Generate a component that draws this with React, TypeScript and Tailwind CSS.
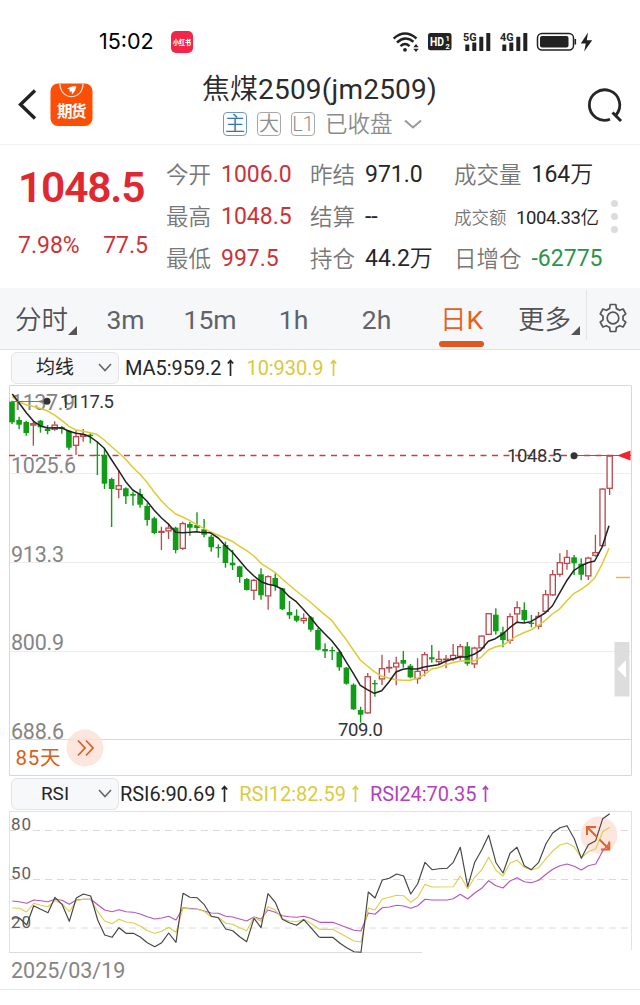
import React from "react";

type Pt = [number, number];
type Candle = [number, number, number, number, "g" | "r"];

const FONT = "font-['Roboto','Noto_Sans_CJK_SC',sans-serif]";

// Each series is stored in thirds of a pixel, in segments with their own origin.
const place = (pts: Pt[], ox: number, oy: number): string =>
  pts.map(([x, y]) => `${(ox + x / 3).toFixed(1)},${(oy + y / 3).toFixed(1)}`).join(" ");

// wick top, body top, body bottom, wick bottom, direction
const candles: Candle[] = [
  [400.7, 401.7, 422.3, 424, "g"], [416.7, 420, 424.7, 429.3, "g"], [420.7, 422, 433, 435.7, "g"],
  [420, 423.3, 425.5, 445.7, "r"], [420, 420.7, 427.3, 432.7, "g"], [425, 428.7, 431, 434.3, "g"],
  [421.3, 424.7, 429.7, 430.7, "r"], [426, 427, 429, 433.7, "g"], [430, 430.7, 447.7, 450, "g"],
  [430, 436.3, 445.7, 455, "r"], [429, 434.3, 436.7, 441.7, "r"], [433.3, 434.7, 436, 443.3, "g"],
  [441.7, 454.7, 455.7, 475, "g"], [448.3, 455.3, 483.7, 489, "g"], [477.7, 479, 489, 527, "g"],
  [470, 485.3, 489.7, 498.3, "r"], [487.3, 488.3, 496.3, 504, "g"], [491.7, 494, 495.7, 505.7, "g"],
  [488.7, 494, 504.7, 507.7, "g"], [503.3, 506, 520, 525.7, "g"], [516.7, 518.3, 533, 534.3, "g"],
  [526.7, 531, 532.7, 550, "r"], [523.3, 527.7, 531.3, 539, "r"], [526.7, 527.7, 550, 553.3, "g"],
  [521.7, 523.3, 548.7, 550, "r"], [522, 524, 527.7, 535.7, "g"], [512.3, 525, 528, 531, "g"],
  [519, 529.3, 534.7, 537.3, "g"], [535, 536.7, 547.3, 551.7, "g"], [544.3, 547, 548.3, 557.7, "g"],
  [541.7, 545, 563, 567.7, "g"], [550, 562.7, 565.3, 570, "g"], [565.7, 566.3, 577, 582.7, "g"],
  [578, 579, 590, 590.5, "g"], [579, 580, 590.7, 600, "r"], [568.3, 574.3, 595.3, 599.7, "g"],
  [575.3, 576.3, 596.3, 609.7, "r"], [573.3, 578, 586, 590.7, "g"], [588, 588.3, 609.3, 610, "g"],
  [601, 612, 615.3, 619, "g"], [609.3, 615.7, 620.7, 622.3, "g"], [613.3, 618, 621, 623.7, "r"],
  [616, 617.3, 629.7, 631.7, "g"], [628, 630, 649.7, 650.5, "g"], [643.3, 649, 651.3, 658, "g"],
  [646.7, 650, 651.3, 660, "g"], [650, 652, 667.3, 670.7, "g"], [667, 667.7, 683.7, 684.7, "g"],
  [683.3, 684.7, 709.3, 710, "g"], [706.7, 710, 714.7, 722.7, "g"], [673, 676.3, 713.3, 714, "r"],
  [680, 683, 684.3, 696.7, "g"], [654.7, 668.3, 679.3, 685, "r"], [660, 667, 668, 672.7, "r"],
  [656.7, 662.7, 667.3, 685.3, "r"], [651, 660, 663.7, 667.7, "g"], [664, 665.7, 677.3, 678.3, "g"],
  [658.3, 671, 679, 683.7, "r"], [652, 654.3, 670.7, 676.3, "r"], [645, 657.3, 659.3, 662.7, "g"],
  [650.7, 659, 662, 664, "r"], [655, 658.7, 660, 668.3, "r"], [644, 655, 659.3, 661, "r"],
  [644, 646.3, 656.7, 660.3, "r"], [642, 646.3, 663.7, 665.7, "g"], [646.7, 647.7, 664.3, 668, "r"],
  [635.3, 635.7, 648.3, 649, "r"], [613, 613.3, 634.7, 635, "r"], [608.3, 614.7, 631.3, 634.7, "g"],
  [626.7, 632.3, 640, 647.3, "g"], [613.3, 616.3, 640.7, 643.7, "r"], [601.3, 607.3, 614.3, 622.7, "r"],
  [602.3, 610, 620, 622, "g"], [615, 622.7, 624, 627.3, "g"], [612, 616, 626.7, 629.3, "r"],
  [590, 594.3, 611.7, 613.3, "r"], [570, 574.3, 595.3, 596, "r"], [553.3, 562.3, 574.7, 576.7, "r"],
  [550, 557, 563.7, 569.7, "r"], [555, 557.3, 563.3, 575, "g"], [558.3, 563.7, 574.7, 580.3, "g"],
  [556.7, 557.7, 576.3, 580, "r"], [534.7, 552.3, 555.7, 556.7, "r"], [488, 488.7, 546, 547.3, "r"],
  [455.7, 455.7, 488.7, 495, "r"],
];

const ma5 = [
  place([[37,42],[58,70],[80,100],[101,124],[122,138],[143,144],[165,143],[186,144],[207,154],[228,160],[250,163],[270,170],[292,186],[313,205],[335,240],[356,272],[377,305],[398,330],[420,343],[441,364],[462,390],[484,413],[505,432],[527,457],[548,458],[570,457],[590,455]], 0, 380),
  place([[0,97],[30,98],[55,114],[76,137],[97,156],[140,207],[162,228],[183,245],[204,253],[225,257],[246,267],[268,290],[289,305],[310,328],[331,352],[352,378],[374,401],[395,422],[417,450],[438,485],[460,520],[481,556],[502,569],[523,580],[545,572],[566,547],[588,516],[609,508],[630,505]], 200, 500),
  place([[30,686],[52,687],[73,681],[95,677],[115,674],[137,664],[158,657],[180,651],[200,651],[222,643],[243,630],[265,604],[286,596],[308,582],[329,563],[350,547],[371,549],[392,545],[414,532],[435,519],[457,498],[478,461],[499,424],[521,392],[542,378],[563,368],[584,363],[606,322],[627,257]], 400, 440),
].join(" ");

const ma10 = [
  place([[37,50],[50,62],[80,75],[110,82],[143,93],[165,106],[186,122],[207,139],[228,150],[250,154],[290,163],[313,180],[335,200],[356,218],[377,238],[398,262],[420,283],[441,307],[462,335],[484,362],[505,383],[527,402],[548,411],[570,422],[590,434]], 0, 380),
  place([[0,79],[30,95],[55,106],[97,124],[119,139],[140,152],[162,168],[183,190],[225,217],[246,236],[289,273],[331,306],[352,325],[395,361],[417,391],[438,418],[460,450],[481,480],[502,498],[523,515],[545,529],[566,534],[588,539],[609,541]], 200, 500),
  place([[30,721],[52,715],[73,704],[95,687],[115,683],[137,674],[158,668],[180,663],[222,663],[243,652],[265,630],[286,621],[308,616],[329,602],[350,588],[371,578],[392,570],[414,557],[435,542],[457,522],[478,508],[499,484],[521,461],[542,449],[563,434],[584,414],[606,373],[627,325]], 400, 440),
].join(" ");

const rsi6 = [
  place([[37,684],[58,684],[80,705],[101,647],[122,658],[144,668],[165,622],[186,643],[208,694],[229,624],[250,612],[272,618],[293,690],[314,735],[336,742],[357,713],[378,730],[400,730],[421,741],[442,758],[464,770],[485,758],[506,729],[528,757],[549,610],[570,622],[591,623],[612,643],[634,679],[655,683],[677,717],[698,722],[719,740],[740,755],[762,685],[783,713],[804,611],[826,637],[847,688],[868,698],[890,706],[911,689],[932,712],[956,740]], 0, 690),
  place([[0,502],[38,502],[60,520],[80,533],[102,545],[123,547],[145,366],[165,384],[187,330],[208,325],[230,312],[251,318],[272,372],[293,341],[315,277],[336,299],[357,296],[381,295],[400,277],[421,232],[443,350],[464,277],[485,240],[506,196],[528,278],[549,309],[570,250],[591,232],[613,287],[634,299],[656,277],[678,221],[698,189],[720,173],[741,167],[763,206],[784,265],[805,224],[827,212],[848,146],[869,131]], 320, 770),
].join(" ");

const rsi12 = [
  place([[37,654],[58,655],[80,666],[101,640],[122,646],[144,650],[165,632],[186,641],[208,665],[229,632],[250,628],[272,628],[293,665],[314,693],[336,701],[357,688],[378,696],[400,699],[421,708],[442,722],[464,730],[485,724],[506,712],[528,727],[549,655],[570,657],[591,658],[612,664],[634,680],[655,682],[677,700],[698,703],[719,713],[740,722],[762,682],[783,694],[804,650],[826,660],[847,686],[868,693],[890,695],[911,688],[932,700],[956,716]], 0, 690),
  place([[0,478],[38,478],[60,490],[102,513],[123,516],[145,414],[165,420],[187,387],[208,382],[230,376],[251,377],[272,397],[293,382],[315,343],[336,351],[400,350],[421,318],[443,356],[464,322],[485,300],[506,262],[528,301],[549,318],[570,280],[591,270],[613,292],[634,300],[656,293],[678,266],[698,243],[720,225],[741,219],[763,231],[784,263],[805,245],[827,236],[848,185],[869,172]], 320, 770),
].join(" ");

const rsi24 = [
  place([[37,633],[58,635],[80,640],[101,630],[122,632],[144,635],[165,628],[186,631],[208,643],[229,630],[250,628],[272,628],[293,644],[314,660],[336,665],[357,659],[378,665],[400,667],[421,672],[442,680],[464,687],[485,684],[506,679],[528,690],[549,653],[591,657],[634,669],[655,670],[677,679],[698,681],[719,687],[740,693],[762,681],[783,687],[804,660],[826,667],[847,677],[868,680],[890,682],[911,679],[932,685],[956,695]], 0, 690),
  place([[0,457],[38,457],[60,465],[102,481],[123,483],[145,429],[165,433],[187,413],[208,411],[230,406],[251,408],[272,415],[293,407],[315,388],[336,390],[381,390],[400,386],[421,373],[443,387],[464,369],[485,355],[506,332],[528,347],[549,354],[570,333],[591,323],[613,335],[634,338],[656,331],[678,313],[698,298],[720,287],[741,282],[763,289],[784,300],[805,287],[827,282],[848,243],[869,218]], 320, 770),
].join(" ");

function Signal({ label }: { label: string }) {
  return (
    <svg className="h-5 w-7 shrink-0" viewBox="0 0 28 20" fill="#222">
      <text x="0" y="8.6" fontSize="11" fontWeight="700" textLength="13.5" lengthAdjust="spacingAndGlyphs">{label}</text>
      <rect x="2.3" y="12.5" width="4" height="6.5" rx="0.6" />
      <rect x="9.3" y="10.5" width="4" height="8.5" rx="0.6" />
      <rect x="16.3" y="4.8" width="4" height="14.2" rx="0.6" />
      <rect x="23.3" y="1" width="4" height="18" rx="0.6" />
    </svg>
  );
}

function StatusBar() {
  return (
    <div className="flex h-[70px] items-center pt-[13px]">
      <div className="ml-[99px] w-[72px] font-['Inter',sans-serif] text-[21.500px] font-normal leading-none text-black">15:02</div>
      <div className="flex h-[22px] w-[22px] items-center justify-center rounded-[5px] bg-[#f5254a]">
        <svg viewBox="0 0 22 22" className="h-[22px] w-[22px]">
          <text x="2" y="13.6" fontSize="6.6" fontWeight="900" fill="#fff" textLength="18" lengthAdjust="spacingAndGlyphs">小红书</text>
        </svg>
      </div>
      <svg className="ml-[200px] h-[22px] w-[27px]" viewBox="393 29 27 22" fill="none" stroke="#222" strokeWidth="2.4">
        <path d="M393.6 36.5Q405 26.5 416.5 36.5" />
        <path d="M397 40.5Q405 33 413.5 39.7" />
        <path d="M400.5 44.2Q405 40 409.5 44.2" />
        <circle cx="405" cy="47.8" r="1.9" fill="#222" stroke="none" />
        <path d="M416 42l2.7 3.3h-5.4zM416 50l2.7-3.3h-5.4z" fill="#222" stroke="none" />
      </svg>
      <svg className="ml-[8px] h-[18px] w-[24px]" viewBox="0 0 24 18">
        <rect width="23.5" height="17.3" rx="2.5" fill="#222" />
        <text x="2" y="13.4" fontSize="13.5" fontWeight="700" fill="#fff" textLength="14" lengthAdjust="spacingAndGlyphs">HD</text>
        <text x="17.500" y="8" fontSize="7.500" fontWeight="700" fill="#fff">1</text>
        <text x="17.500" y="15.8" fontSize="7.500" fontWeight="700" fill="#fff">2</text>
      </svg>
      <div className="ml-[11px]"><Signal label="5G" /></div>
      <div className="ml-[9px]"><Signal label="4G" /></div>
      <svg className="ml-[8px] h-5 w-[58px]" viewBox="536 31 58 20">
        <rect x="537.5" y="32.5" width="36" height="16.5" rx="4.5" fill="none" stroke="#222" strokeWidth="1.5" />
        <rect x="540" y="35" width="28.5" height="11.5" rx="2" fill="#222" />
        <path d="M575.3 38v5.5" stroke="#222" strokeWidth="1.6" />
        <path d="M588 31.5l-7.2 11h5l-1.6 8 8-11.2h-5.4z" fill="#222" />
      </svg>
    </div>
  );
}

function Tag({ children, active }: { children: React.ReactNode; active?: boolean }) {
  return (
    <span className={active
      ? "flex h-[24px] w-[24px] items-center justify-center rounded-[4px] border border-[#6c9cc4] text-[20px] font-[350] leading-none text-[#2e78b4]"
      : "flex h-[24px] w-[24px] items-center justify-center rounded-[4px] border border-[#a8a8a8] text-[20px] font-[350] leading-none text-[#8d8d8d]"}>
      {children}
    </span>
  );
}

function Header() {
  return (
    <header className="flex h-[75px] border-b border-[#f1f1f1]">
      <svg className="ml-[16px] mt-[18px] h-[34px] w-[22px] shrink-0" viewBox="16 88 22 34" fill="none" stroke="#222" strokeWidth="3.4">
        <path d="M35 90.5L20.5 104.5L35 118.5" />
      </svg>
      <svg className="ml-[12px] mt-[13px] h-[43px] w-[43px] shrink-0" viewBox="50 83 43 43">
        <rect x="50.5" y="83.5" width="42" height="42.5" rx="7.5" fill="#fb4e06" />
        <path d="M60 83.5C60 101 83 101 83 83.5" fill="none" stroke="#ffd9c5" strokeWidth="1.3" />
        <path d="M67 88.5q5-3 9.500-2q-1 5-4.500 8l-.5-3.500l-2 1l.3-2.500z" fill="#fff" />
        <text x="57" y="116.500" fontSize="15.500" fontWeight="700" fill="#fff" textLength="29.500">期货</text>
      </svg>
      <div className="ml-[109px] flex w-[260px] shrink-0 flex-col">
        <h1 className="mt-[4px] h-[32px] whitespace-nowrap text-[28px] font-normal leading-[31px] text-[#2b2b2b]"><span className="font-[350]">焦煤</span><span className="tracking-[0.200px]">2509(jm2509)</span></h1>
        <div className="ml-[21px] mt-[6px] flex items-center gap-[10px]">
          <Tag active>主</Tag>
          <Tag>大</Tag>
          <Tag>L1</Tag>
          <span className="whitespace-nowrap text-[22.500px] font-[350] leading-[24px] text-[#8b8b8b]">已收盘</span>
          <svg className="h-[11px] w-[20px]" viewBox="0 0 20 11" fill="none" stroke="#999" strokeWidth="2"><path d="M2 1.500l8 7l8-7" /></svg>
        </div>
      </div>
      <svg className="ml-[122px] mt-[15px] h-[42px] w-[42px] shrink-0" viewBox="584 85 42 42" fill="none" stroke="#262626" strokeWidth="2.800">
        <path d="M610 119.200A15.200 15.200 0 1 1 616 115" />
        <path d="M612.500 112.500l8.500 8.500" strokeWidth="3" />
      </svg>
    </header>
  );
}

// Numbers keep the regular weight; the Chinese unit behind them is lighter.
function Value({ text, unit }: { text: string; unit?: string }) {
  return <>{text}{unit && <span className="font-[350]">{unit}</span>}</>;
}

function Cell({ label, value, unit, tone, wide }: { label: string; value: string; unit?: string; tone: string; wide?: boolean }) {
  return (
    <div className={wide ? "flex w-[160px] items-center whitespace-nowrap" : "flex w-[144px] items-center whitespace-nowrap"}>
      <span className="text-[22.500px] font-[350] text-[#777]">{label}</span>
      <span className={`ml-[10px] text-[23px] ${tone}`}><Value text={value} unit={unit} /></span>
    </div>
  );
}

function Quote() {
  return (
    <section className="flex h-[143px]">
      <div className="w-[166px] shrink-0 pl-[18px]">
        <div className="mt-[21px] h-[44px] text-[42.500px] font-semibold leading-[44px] tracking-[-1.200px] text-[#e02830]">1048.5</div>
        <div className="mt-[21px] flex justify-between pr-[18px] text-[23px] leading-[29px] text-[#cb3338]">
          <span>7.98%</span><span>77.5</span>
        </div>
      </div>
      <div className="flex flex-col pt-[9px] leading-[42px]">
        <div className="flex h-[42px]">
          <Cell label="今开" value="1006.0" tone="text-[#cb3338]" />
          <Cell label="昨结" value="971.0" tone="text-[#262626]" />
          <Cell label="成交量" value="164" unit="万" tone="text-[#262626]" wide />
        </div>
        <div className="flex h-[42px]">
          <Cell label="最高" value="1048.5" tone="text-[#cb3338]" />
          <Cell label="结算" value="--" tone="text-[#262626]" />
          <div className="flex w-[160px] items-center whitespace-nowrap pt-[1px]">
            <span className="w-[62px] text-[17.500px] font-[350] text-[#777]">成交额</span>
            <span className="text-[18.500px] tracking-[-0.400px] text-[#262626]"><Value text="1004.33" unit="亿" /></span>
          </div>
        </div>
        <div className="flex h-[42px]">
          <Cell label="最低" value="997.5" tone="text-[#cb3338]" />
          <Cell label="持仓" value="44.2" unit="万" tone="text-[#262626]" />
          <Cell label="日增仓" value="-62775" tone="text-[#2b9547]" wide />
        </div>
      </div>
      <div className="-ml-[3px] mt-[55px] flex flex-col gap-[6px]">
        <i className="h-[7px] w-[7px] rounded-full bg-[#dcdcdc]" />
        <i className="h-[7px] w-[7px] rounded-full bg-[#dcdcdc]" />
        <i className="h-[7px] w-[7px] rounded-full bg-[#dcdcdc]" />
      </div>
    </section>
  );
}

function Corner() {
  return <svg className="mt-[20px] h-[9px] w-[9px]" viewBox="0 0 9 9"><path d="M9 0v9H0z" fill="#555" /></svg>;
}

function Tabs() {
  return (
    <nav className="flex h-[62px] items-center border-b border-[#e0e1e3] bg-[#f6f7f9] text-[26.500px] leading-none text-[#606266]">
      <div className="flex w-[91px] items-center pl-[15px] pt-[4px]"><span className="font-[350] text-[#505256]">分时</span><Corner /></div>
      <div className="flex w-[69px] justify-center pt-[4px]">3m</div>
      <div className="flex w-[100px] justify-center pt-[4px]">15m</div>
      <div className="flex w-[67px] justify-center pt-[4px]">1h</div>
      <div className="flex w-[99px] justify-center pt-[4px]">2h</div>
      <div className="flex h-full w-[71px] flex-col items-center pt-[19px] text-[#e65f26]">
        <span className="h-[26px] whitespace-nowrap"><span className="font-[350]">日</span>K</span>
        <i className="mt-[8px] h-[6px] w-[45px] shrink-0 rounded-full bg-[#e2571d]" />
      </div>
      <div className="flex w-[89px] items-center pl-[21px] pt-[4px]"><span className="font-[350] text-[#505256]">更多</span><Corner /></div>
      <div className="mb-[8px] flex h-[50px] items-center border-l border-[#e4e5e7] pl-[11px]">
        <svg className="mt-[6px] h-[30px] w-[30px]" viewBox="0 0 30 30" fill="none" stroke="#555" strokeWidth="1.700" strokeLinejoin="round">
          <path d="M12.200 1.500h5.600l.6 4.100q1.800.6 3.200 1.700l3.500-1.300l2.700 4.800l-2.800 2.300v3.800l2.800 2.300l-2.700 4.800l-3.500-1.300q-1.400 1.100-3.200 1.700l-.6 4.100h-5.600l-.6-4.100q-1.800-.6-3.200-1.700l-3.500 1.300l-2.700-4.800l2.800-2.300v-3.800l-2.800-2.300l2.700-4.800l3.500 1.300q1.400-1.100 3.200-1.700z" />
          <circle cx="15" cy="15" r="5.800" />
        </svg>
      </div>
    </nav>
  );
}

function Picker({ label }: { label: string }) {
  return (
    <div className="ml-[11px] flex h-[32px] w-[108px] items-center rounded-[6px] border border-[#e3e5e8] bg-[#f7f8fa]">
      <span className="w-[86px] text-center text-[19px] leading-none text-[#262626]">{label}</span>
      <svg className="h-[9px] w-[14px]" viewBox="0 0 14 9" fill="none" stroke="#666" strokeWidth="1.600"><path d="M1 1l6 6.500l6-6.500" /></svg>
    </div>
  );
}

function Reading({ text, tone }: { text: string; tone: string }) {
  return (
    <span className={`flex items-center whitespace-nowrap text-[20px] leading-none tracking-[-0.060px] ${tone}`}>
      {text}
      <svg className="ml-[5px] h-[17px] w-[9px]" viewBox="0 0 9 17" fill="none" stroke="currentColor" strokeWidth="1.700"><path d="M4.500 17V1.500M1.800 4.500l2.700-3l2.700 3" /></svg>
    </span>
  );
}

function PriceChart() {
  return (
    <svg className="block h-[391px] w-[640px]" viewBox="0 385 640 391">
      <g stroke="#ededed"><path d="M9 473.500H631M9 562.500H631M9 651.500H631" /></g>
      <path d="M9.500 385.500H631.500V775.500H9.500zM9 739.500H631" fill="none" stroke="#d8d8d8" />
      <g fill="#858585" fontSize="21.500">
        <text x="11" y="409.500" textLength="64">1137.9</text>
        <text x="11" y="472.500" textLength="65">1025.6</text>
        <text x="11" y="561.500" textLength="53">913.3</text>
        <text x="11" y="650" textLength="53">800.9</text>
        <text x="11" y="738.500" textLength="53">688.6</text>
      </g>
      <path d="M9 455.500H618" stroke="#cf3a42" strokeWidth="1.400" strokeDasharray="6 5.500" />
      {candles.map(([wt, bt, bb, wb, dir], i) => {
        const x = 12 + i * 7.115;
        const h = Math.max(1.200, bb - bt);
        return dir === "g" ? (
          <g key={i} fill="#109c16">
            <rect x={x - 0.7} y={wt} width="1.400" height={wb - wt} />
            <rect x={x - 2.800} y={bt} width="5.600" height={h} />
          </g>
        ) : (
          <g key={i} stroke="#b9474a" strokeWidth="1.300" fill="#fff">
            <path d={`M${x} ${wt}V${bt}M${x} ${bb}V${wb}`} />
            <rect x={x - 2.600} y={bt + 0.4} width="5.200" height={Math.max(0.6, h - 0.8)} />
          </g>
        );
      })}
      <polyline points={ma10} fill="none" stroke="#dfca35" strokeWidth="1.500" strokeLinejoin="round" />
      <polyline points={ma5} fill="none" stroke="#222" strokeWidth="1.500" strokeLinejoin="round" />
      <path d="M13 401.500H47" stroke="#777" />
      <circle cx="47" cy="401.300" r="3.500" fill="#333" />
      <path d="M574 455.500H631" stroke="#a25055" />
      <circle cx="574" cy="455.700" r="3.500" fill="#333" />
      <path d="M617 455.500l13.500-5v10z" fill="#ed2530" />
      <path d="M616 577.500H630" stroke="#e2bd3a" strokeWidth="1.500" />
      <g fill="#333" fontSize="18.500">
        <text x="60" y="407.500" textLength="54">1117.5</text>
        <text x="507" y="462" textLength="55">1048.5</text>
        <text x="338" y="736" textLength="45">709.0</text>
      </g>
      <text x="15.500" y="764.500" fontSize="20.500" fill="#d4611c" textLength="45">85天</text>
      <circle cx="85" cy="748" r="18.500" fill="#fbe0d4" fillOpacity="0.800" />
      <path d="M78 740.500l7 7.500l-7 7.500M86 740.500l7 7.500l-7 7.500" fill="none" stroke="#d9632f" strokeWidth="1.800" />
      <rect x="614.500" y="642" width="15" height="54.500" fill="#d9d9d9" fillOpacity="0.900" />
      <path d="M626 660v18l-8.500-9z" fill="#fff" />
    </svg>
  );
}

function RsiChart() {
  return (
    <svg className="block h-[142px] w-[640px] shrink-0" viewBox="0 811 640 142">
      <path d="M9.500 952.500V811.500H631.500V950" fill="none" stroke="#e2e2e2" />
      <path d="M9 952.500H422" stroke="#dcdcdc" />
      <path d="M9 830.500H631M9 879.500H631M9 928H631" stroke="#dadada" strokeDasharray="7 5" />
      <g fill="#606060" fontSize="17">
        <text x="11" y="830" textLength="20">80</text>
        <text x="11" y="879" textLength="20">50</text>
        <text x="11" y="927.500" textLength="20">20</text>
      </g>
      <circle cx="599" cy="835" r="18.500" fill="#fbe0d4" fillOpacity="0.800" />
      <g fill="none" strokeLinejoin="round" strokeWidth="1.150">
        <polyline points={rsi24} stroke="#b755bd" />
        <polyline points={rsi12} stroke="#dccf4c" />
        <polyline points={rsi6} stroke="#444" />
      </g>
      <path d="M597 837L587.500 827.500M587 835V827H596M599.500 839.500L609 849M601 849.500H609.300V841.500" fill="none" stroke="#e4622c" strokeWidth="2" />
    </svg>
  );
}

export default function App() {
  return (
    <main className={`flex h-[1005px] w-[640px] flex-col overflow-hidden bg-white ${FONT}`}>
      <StatusBar />
      <Header />
      <Quote />
      <Tabs />
      <div className="flex h-[35px] items-center">
        <Picker label="均线" />
        <div className="ml-[6px] flex gap-[11px]">
          <Reading text="MA5:959.2" tone="text-[#262626]" />
          <Reading text="10:930.9" tone="text-[#dcc83a]" />
        </div>
      </div>
      <PriceChart />
      <div className="flex h-[35px] items-center">
        <Picker label="RSI" />
        <div className="ml-[1px] flex gap-[10px]">
          <Reading text="RSI6:90.69" tone="text-[#262626]" />
          <Reading text="RSI12:82.59" tone="text-[#dccb3e]" />
          <Reading text="RSI24:70.35" tone="text-[#b53fbd]" />
        </div>
      </div>
      <RsiChart />
      <div className="flex h-[36px] items-center pl-[11px] text-[21.500px] leading-none text-[#858585]">2025/03/19</div>
      <div className="h-px w-full bg-[#e9e9e9]" />
    </main>
  );
}
